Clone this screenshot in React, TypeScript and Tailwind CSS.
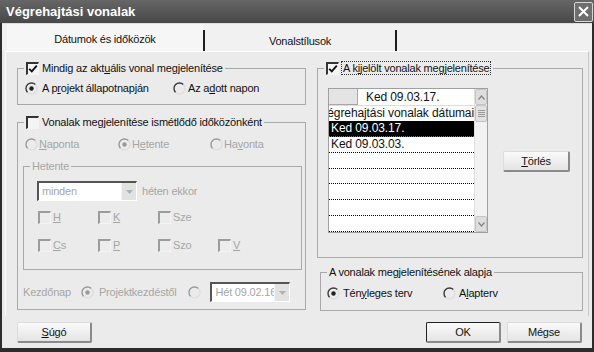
import React from "react";

const Radio = ({ checked = false, disabled = false }: { checked?: boolean; disabled?: boolean }) => (
  <svg width="13" height="13" viewBox="0 0 13 13" className="shrink-0">
    <path d="M10.4 2.6 A5.5 5.5 0 0 0 2.6 10.4" fill="none" stroke={disabled ? "#9a9a9a" : "#3a3a3a"} strokeWidth="1.4" />
    <path d="M2.6 10.4 A5.5 5.5 0 0 0 10.4 2.6" fill="none" stroke="#dcdcdc" strokeWidth="1.2" />
    {checked && <circle cx="6.5" cy="6.5" r="2.2" fill={disabled ? "#9a9a9a" : "#222"} />}
  </svg>
);

const Check = ({ checked = false, disabled = false }: { checked?: boolean; disabled?: boolean }) => (
  <div
    className={`w-[13px] h-[13px] shrink-0 border-t-2 border-l-2 border-r border-b border-r-[#f4f4f4] border-b-[#f4f4f4] flex items-center justify-center ${
      disabled ? "border-t-[#9c9c9c] border-l-[#9c9c9c] bg-[#ececec]" : "border-t-[#333] border-l-[#333] bg-[#f4f4f4]"
    }`}
  >
    {checked && (
      <svg width="10" height="10" viewBox="0 0 10 10">
        <path d="M1.2 4.8 L3.8 7.4 L8.8 1.6" fill="none" stroke="#111" strokeWidth="1.9" />
      </svg>
    )}
  </div>
);

const Group = ({ className, label, children }: { className: string; label: React.ReactNode; children?: React.ReactNode }) => (
  <div className={`relative border border-[#a9a9a9] ${className}`}>
    <div className="absolute -top-[8px] left-[6px] bg-[#ebebeb] px-[2px] flex items-center h-[14px]">{label}</div>
    {children}
  </div>
);

const Dis = ({ children }: { children: React.ReactNode }) => <span className="text-[#a6a6a6]">{children}</span>;

const Btn = ({ children, className = "", def = false }: { children: React.ReactNode; className?: string; def?: boolean }) => (
  <div
    className={`h-[21px] flex items-center justify-center rounded-[2px] bg-gradient-to-b from-[#fafafa] to-[#e4e4e4] border-r-2 border-b-2 border-r-[#8a8a8a] border-b-[#8a8a8a] ${
      def ? "border-l border-t border-[#222] border-2" : "border-l border-t border-l-[#dcdcdc] border-t-[#dcdcdc]"
    } ${className}`}
  >
    {children}
  </div>
);

const Dropdown = ({ text, w, disabled = false }: { text: string; w: string; disabled?: boolean }) => (
  <div className={`${w} h-[20px] flex border-t-2 border-l-2 border-t-[#555] border-l-[#555] border-r border-b border-r-white border-b-white bg-white`}>
    <div className={`flex-1 pl-[3px] flex items-center overflow-hidden whitespace-nowrap ${disabled ? "text-[#a6a6a6]" : "text-[#8a8a8a]"}`}>
      {text}
    </div>
    <div className="w-[15px] h-full bg-[#e2e2e2] border-l border-[#f4f4f4] flex items-center justify-center">
      <svg width="7" height="4" viewBox="0 0 7 4">
        <path d="M0 0 L7 0 L3.5 4 Z" fill="#b0b0b0" />
      </svg>
    </div>
  </div>
);

export default function App() {
  return (
    <div className="w-[594px] h-[352px] overflow-hidden flex flex-col bg-[#ebebeb] text-[11px] tracking-[-0.2px] text-[#111] font-['Liberation_Sans',Arial,sans-serif]">
      {/* Title bar */}
      <div className="h-[23px] shrink-0 flex items-center justify-between bg-gradient-to-b from-[#666] to-[#484848] pl-[6px] pr-[1px]">
        <span className="text-white font-bold text-[13px] tracking-normal">Végrehajtási vonalak</span>
        <div className="w-[19px] h-[20px] border border-[#d8d8d8] rounded-[2px] bg-[#6e6e6e] flex items-center justify-center">
          <svg width="11" height="11" viewBox="0 0 11 11">
            <path d="M1 1 L10 10 M10 1 L1 10" stroke="#fff" strokeWidth="2" />
          </svg>
        </div>
      </div>

      <div className="flex-1 flex flex-col border-l-2 border-r-2 border-b-[4px] border-[#2c2c2c]">
        {/* Tabs */}
        <div className="h-[28px] shrink-0 flex items-start bg-[#f1f1f1] border-t border-[#ddd]">
          <div className="ml-[5px] w-[196px] h-full flex items-center justify-center pt-[3px] bg-[#f6f6f6]">Dátumok és időközök</div>
          <div className="w-[2px] h-[22px] mt-[6px] bg-[#1e1e1e]" />
          <div className="w-[190px] h-full flex items-center justify-center pt-[7px]">Vonalstílusok</div>
          <div className="w-[2px] h-[22px] mt-[6px] bg-[#1e1e1e]" />
        </div>

        {/* Tab page */}
        <div className="mx-[3px] h-[265px] shrink-0 flex border-l border-t border-white border-r border-r-[#c8c8c8] pl-[11px] pt-[16px] gap-[11px]">
          {/* Left column */}
          <div className="w-[289px] flex flex-col">
            <Group
              className="h-[37px]"
              label={
                <div className="flex items-center gap-[3px]">
                  <Check checked />
                  <span>
                    Mindig az akt<u>u</u>ális vonal megjelenítése
                  </span>
                </div>
              }
            >
              <div className="flex items-center pt-[12px] pl-[7px] h-[26px]">
                <div className="w-[148px] flex items-center gap-[4px]">
                  <Radio checked />
                  <span>
                    A p<u>r</u>ojekt állapotnapján
                  </span>
                </div>
                <div className="flex items-center gap-[2px]">
                  <Radio />
                  <span>
                    Az a<u>d</u>ott napon
                  </span>
                </div>
              </div>
            </Group>

            <Group
              className="h-[188px] mt-[17px]"
              label={
                <div className="flex items-center gap-[3px]">
                  <Check />
                  <span>Vonalak megjelenítése ismétlődő időközönként</span>
                </div>
              }
            >
              <div className="flex items-center mt-[14px] pl-[7px] h-[14px]">
                <div className="w-[93px] flex items-center gap-[1px]">
                  <Radio disabled />
                  <Dis>
                    <u>N</u>aponta
                  </Dis>
                </div>
                <div className="w-[92px] flex items-center gap-[1px]">
                  <Radio checked disabled />
                  <Dis>
                    H<u>e</u>tente
                  </Dis>
                </div>
                <div className="flex items-center gap-[1px]">
                  <Radio disabled />
                  <Dis>
                    Ha<u>v</u>onta
                  </Dis>
                </div>
              </div>

              <Group className="ml-[5px] mt-[15px] w-[279px] h-[104px]" label={<Dis>Hetente</Dis>}>
                <div className="flex items-center pl-[13px] pt-[14px]">
                  <Dropdown text="minden" w="w-[100px]" disabled />
                  <span className="ml-[5px]">
                    <Dis>héten ekkor</Dis>
                  </span>
                </div>
                <div className="flex items-center pl-[14px] mt-[9px] h-[14px]">
                  {[
                    ["H", ""],
                    ["K", ""],
                    ["", "Sze"],
                  ].map(([u, rest], i) => (
                    <div key={i} className="w-[60px] flex items-center gap-[2px]">
                      <Check disabled />
                      <Dis>
                        <u>{u}</u>
                        {rest}
                      </Dis>
                    </div>
                  ))}
                </div>
                <div className="flex items-center pl-[14px] mt-[14px] h-[14px]">
                  {[
                    ["C", "s"],
                    ["P", ""],
                    ["", "Szo"],
                    ["V", ""],
                  ].map(([u, rest], i) => (
                    <div key={i} className="w-[60px] flex items-center gap-[2px]">
                      <Check disabled />
                      <Dis>
                        <u>{u}</u>
                        {rest}
                      </Dis>
                    </div>
                  ))}
                </div>
              </Group>

              <div className="flex items-center mt-[12px] pl-[5px] h-[20px]">
                <Dis>Kezdőnap</Dis>
                <div className="ml-[10px] flex items-center gap-[5px]">
                  <Radio checked disabled />
                  <Dis>Projektkezdéstől</Dis>
                </div>
                <div className="ml-[12px]">
                  <Radio disabled />
                </div>
                <div className="ml-[9px]">
                  <Dropdown text="Hét 09.02.16" w="w-[80px]" disabled />
                </div>
              </div>
            </Group>
          </div>

          {/* Right column */}
          <div className="w-[266px] flex flex-col">
            <Group
              className="h-[190px]"
              label={
                <div className="flex items-center gap-[2px]">
                  <Check checked />
                  <span className="border border-dotted border-[#333] px-[1px] leading-[12px]">
                    A k<u>i</u>jelölt vonalak megjelenítése
                  </span>
                </div>
              }
            >
              <div className="flex items-start">
                <div className="ml-[10px] mt-[19px] w-[160px] h-[145px] border border-[#a0a0a0] bg-white flex text-[12px] tracking-[-0.1px]">
                  <div className="w-[145px] flex flex-col">
                    <div className="h-[16px] flex items-center">
                      <div className="w-[29px] h-full bg-[#e4e4e4] border-r border-b border-[#a8a8a8]" />
                      <span className="pl-[8px]">Ked 09.03.17.</span>
                    </div>
                    <div className="h-[16px] flex items-center justify-end overflow-hidden whitespace-nowrap border-t border-[#ddd]">
                      Végrehajtási vonalak dátumai
                    </div>
                    <div className="h-[16px] flex items-center bg-black text-white pl-[2px] border-b border-dotted border-[#777]">Ked 09.03.17.</div>
                    <div className="h-[16px] flex items-center pl-[2px] border-b border-dotted border-black">Ked 09.03.03.</div>
                    {[0, 1, 2, 3, 4].map((i) => (
                      <div key={i} className="h-[16px] border-b border-dotted border-black" />
                    ))}
                  </div>
                  <div className="w-[14px] flex flex-col bg-[#f2f2f2] border-l border-[#e0e0e0]">
                    <div className="h-[16px] bg-[#dedede] border border-[#c4c4c4] rounded-[2px] flex items-center justify-center">
                      <svg width="7" height="5" viewBox="0 0 7 5">
                        <path d="M0.5 4.5 L3.5 1 L6.5 4.5" fill="none" stroke="#888" strokeWidth="1.4" />
                      </svg>
                    </div>
                    <div className="h-[17px] bg-[#e2e2e2] border border-[#c4c4c4] rounded-[2px] flex flex-col items-center justify-center gap-[1px]">
                      <div className="w-[7px] h-[1px] bg-[#999]" />
                      <div className="w-[7px] h-[1px] bg-[#999]" />
                      <div className="w-[7px] h-[1px] bg-[#999]" />
                      <div className="w-[7px] h-[1px] bg-[#999]" />
                    </div>
                    <div className="flex-1" />
                    <div className="h-[16px] bg-[#dedede] border border-[#c4c4c4] rounded-[2px] flex items-center justify-center">
                      <svg width="7" height="5" viewBox="0 0 7 5">
                        <path d="M0.5 0.5 L3.5 4 L6.5 0.5" fill="none" stroke="#888" strokeWidth="1.4" />
                      </svg>
                    </div>
                  </div>
                </div>
                <Btn className="ml-[15px] mt-[82px] w-[67px] h-[20px]">
                  <span>
                    <u>T</u>örlés
                  </span>
                </Btn>
              </div>
            </Group>

            <Group className="ml-[3px] mt-[14px] w-[263px] h-[39px]" label={<span>A vonalak megjelenítésének alapja</span>}>
              <div className="flex items-center pt-[13px] pl-[6px] h-[27px]">
                <div className="w-[116px] flex items-center gap-[3px]">
                  <Radio checked />
                  <span>
                    Tén<u>y</u>leges terv
                  </span>
                </div>
                <div className="flex items-center gap-[3px]">
                  <Radio />
                  <span>
                    A<u>l</u>apterv
                  </span>
                </div>
              </div>
            </Group>
          </div>
        </div>

        {/* Buttons */}
        <div className="flex items-center mt-[6px]">
          <Btn className="ml-[15px] w-[75px]">
            <span>
              <u>S</u>úgó
            </span>
          </Btn>
          <div className="flex-1" />
          <Btn def className="w-[75px]">
            <span>OK</span>
          </Btn>
          <Btn className="ml-[6px] mr-[10px] w-[75px]">
            <span>Mégse</span>
          </Btn>
        </div>
      </div>
    </div>
  );
}
